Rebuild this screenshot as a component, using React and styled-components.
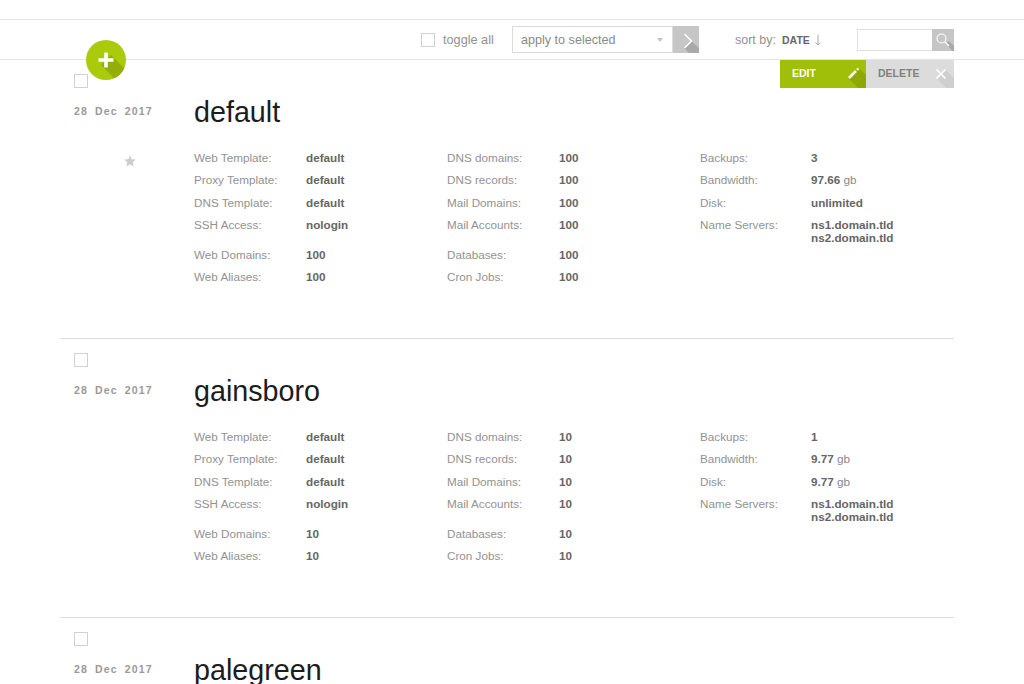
import React from "react";
import styled, { createGlobalStyle } from "styled-components";

const GlobalStyle = createGlobalStyle`
  html, body {
    margin: 0;
    padding: 0;
    height: 684px;
    overflow: hidden;
    background: #fff;
    font-family: "Liberation Sans", Arial, sans-serif;
  }
`;

const Page = styled.div`
  position: relative;
  width: 1024px;
  padding-top: 19px;
`;

const Toolbar = styled.div`
  height: 39px;
  border-top: 1px solid #e4e4e4;
  border-bottom: 1px solid #e4e4e4;
  display: flex;
  align-items: center;
  padding-left: 421px;
`;

const AddButton = styled.a`
  position: absolute;
  left: 86px;
  top: 40px;
  width: 40px;
  height: 40px;
  border-radius: 50%;
  background: #a9cb0c;
  overflow: hidden;
`;

const Check = styled.span`
  display: block;
  flex: none;
  box-sizing: border-box;
  width: 14px;
  height: 14px;
  border: 1px solid #d2d2d2;
  background: #fff;
`;

const ToggleLabel = styled.span`
  margin-left: 8px;
  width: 69px;
  font-size: 12.7px;
  color: #929292;
`;

const Select = styled.div`
  box-sizing: border-box;
  width: 161px;
  height: 27px;
  border: 1px solid #dcdcdc;
  display: flex;
  align-items: center;
  justify-content: space-between;
  padding: 0 9px 0 8px;
  font-size: 12.6px;
  color: #8a8a8a;
`;

const Caret = styled.span`
  width: 0;
  height: 0;
  border-left: 3.5px solid transparent;
  border-right: 3.5px solid transparent;
  border-top: 4px solid #c4c4c4;
`;

const IconButton = styled.span`
  display: block;
  flex: none;
  width: ${(p) => p.$w}px;
  height: ${(p) => p.$h}px;
  background: #c6c6c6;
`;

const SortLabel = styled.span`
  margin-left: 36px;
  font-size: 12.5px;
  color: #929292;
`;

const SortValue = styled.span`
  margin-left: 6px;
  font-size: 10.5px;
  font-weight: bold;
  color: #666;
`;

const SortArrow = styled.svg`
  margin-left: 4px;
  flex: none;
`;

const SearchInput = styled.span`
  display: block;
  margin-left: 35px;
  box-sizing: border-box;
  width: 75px;
  height: 22px;
  border: 1px solid #e0e0e0;
  border-right: 0;
`;

const List = styled.div`
  width: 894px;
  margin-left: 60px;
`;

const Row = styled.section`
  position: relative;
  box-sizing: border-box;
  height: 279px;
  border-bottom: 1px solid #dedede;
  display: grid;
  grid-template-columns: 134px 1fr;
  padding-top: 14px;
`;

const Actions = styled.div`
  position: absolute;
  right: 0;
  top: 0;
  display: flex;
  height: 28px;
`;

const Action = styled.a`
  box-sizing: border-box;
  width: ${(p) => p.$w}px;
  height: 28px;
  padding: 0 0 2px 12px;
  display: flex;
  align-items: center;
  justify-content: space-between;
  font-size: 10.5px;
  font-weight: bold;
  color: ${(p) => (p.$primary ? "#fff" : "#808080")};
  background: ${(p) => (p.$primary ? "#a0bf08" : "#dcdcdc")};
`;

const ActionIcon = styled.svg`
  align-self: flex-start;
`;

const Side = styled.div`
  display: flex;
  flex-direction: column;
  padding-left: 14px;
`;

const DateText = styled.div`
  margin-top: 16px;
  font-size: 10.5px;
  line-height: 14px;
  font-weight: bold;
  letter-spacing: 1.15px;
  word-spacing: 3px;
  color: #999;
  white-space: nowrap;
`;

const Star = styled.svg`
  margin-top: 37px;
  margin-left: 50px;
`;

const Main = styled.div`
  padding-top: 22px;
`;

const Title = styled.h2`
  margin: 0;
  font-size: 28.7px;
  line-height: 32px;
  font-weight: normal;
  color: #1c1c1c;
`;

const Columns = styled.div`
  margin-top: 23px;
  display: grid;
  grid-template-columns: repeat(3, 253px);
`;

const Stats = styled.dl`
  margin: 0 0 7px;
  display: grid;
  grid-template-columns: ${(p) => p.$labelWidth || 112}px 1fr;
  grid-auto-rows: 22.4px;
  align-items: start;
  font-size: 11.7px;
  line-height: 13px;
  &:last-child { margin-bottom: 0; }
`;

const Label = styled.dt`
  color: #929292;
`;

const Value = styled.dd`
  margin: 0;
  font-weight: bold;
  color: #666;
  white-space: pre-line;
`;

const Unit = styled.span`
  font-weight: normal;
  color: #888;
`;

const Gb = ({ v }) => (
  <>
    {v} <Unit>gb</Unit>
  </>
);

function StatGroup({ items, labelWidth }) {
  return (
    <Stats $labelWidth={labelWidth}>
      {items.map(([k, v]) => (
        <React.Fragment key={k}>
          <Label>{k}:</Label>
          <Value>{v}</Value>
        </React.Fragment>
      ))}
    </Stats>
  );
}

const packages = [
  { name: "default", n: "100", backups: "3", bw: <Gb v="97.66" />, disk: "unlimited", star: true, actions: true },
  { name: "gainsboro", n: "10", backups: "1", bw: <Gb v="9.77" />, disk: <Gb v="9.77" /> },
  { name: "palegreen", n: "10", backups: "1", bw: <Gb v="9.77" />, disk: <Gb v="9.77" /> },
];

function Package({ p }) {
  return (
    <Row>
      {p.actions && (
        <Actions>
          <Action $w={86} $primary>
            EDIT
            <ActionIcon width="30" height="28" viewBox="0 0 30 28">
              <polygon points="13,19 23,8 30,15 30,28 22,28" fill="#8ea806" />
              <path d="M13 18 L20 11" stroke="#fff" strokeWidth="2.600" />
              <path d="M21 10 L22.500 8.500" stroke="#fff" strokeWidth="2.400" />
            </ActionIcon>
          </Action>
          <Action $w={88}>
            DELETE
            <ActionIcon width="30" height="28" viewBox="0 0 30 28">
              <polygon points="13,19 22,10 30,18 30,28 22,28" fill="#cfcfcf" />
              <path d="M12.500 9.500 L21.500 18.500 M21.500 9.500 L12.500 18.500" stroke="#fff" strokeWidth="1.700" />
            </ActionIcon>
          </Action>
        </Actions>
      )}
      <Side>
        <Check />
        <DateText>28 Dec 2017</DateText>
        {p.star && (
          <Star width="12" height="12" viewBox="0 0 24 24">
            <path d="M12 .5l3.400 7.800 8.300.8-6.300 5.500 1.900 8.200L12 18.500l-7.300 4.300 1.900-8.200L.3 9.100l8.300-.8z" fill="#cccccc" />
          </Star>
        )}
      </Side>
      <Main>
        <Title>{p.name}</Title>
        <Columns>
          <div>
            <StatGroup
              items={[
                ["Web Template", "default"],
                ["Proxy Template", "default"],
                ["DNS Template", "default"],
                ["SSH Access", "nologin"],
              ]}
            />
            <StatGroup items={[["Web Domains", p.n], ["Web Aliases", p.n]]} />
          </div>
          <div>
            <StatGroup
              items={[
                ["DNS domains", p.n],
                ["DNS records", p.n],
                ["Mail Domains", p.n],
                ["Mail Accounts", p.n],
              ]}
            />
            <StatGroup items={[["Databases", p.n], ["Cron Jobs", p.n]]} />
          </div>
          <div>
            <StatGroup
              labelWidth={111}
              items={[
                ["Backups", p.backups],
                ["Bandwidth", p.bw],
                ["Disk", p.disk],
                ["Name Servers", "ns1.domain.tld\nns2.domain.tld"],
              ]}
            />
          </div>
        </Columns>
      </Main>
    </Row>
  );
}

export default function App() {
  return (
    <Page>
      <GlobalStyle />
      <Toolbar>
        <Check />
        <ToggleLabel>toggle all</ToggleLabel>
        <Select>
          apply to selected
          <Caret />
        </Select>
        <IconButton as="svg" $w={26} $h={27} viewBox="0 0 26 27">
          <polygon points="11,22 18.500,15 26,22 26,27 16,27" fill="#a9a9a9" />
          <path d="M11.500 8 L18.500 15 L11.500 22" fill="none" stroke="#fff" strokeWidth="1.500" />
        </IconButton>
        <SortLabel>sort by:</SortLabel>
        <SortValue>DATE</SortValue>
        <SortArrow width="8" height="12" viewBox="0 0 8 12">
          <path d="M4 0.500V11M1.500 8.500L4 11 6.500 8.500" fill="none" stroke="#aaa" strokeWidth="1" />
        </SortArrow>
        <SearchInput />
        <IconButton as="svg" $w={22} $h={22} viewBox="0 0 22 22">
          <polygon points="14,14 17,12 22,17 22,22 20,22" fill="#a9a9a9" />
          <circle cx="9.500" cy="9.500" r="4.500" fill="none" stroke="#fff" strokeWidth="1.100" />
          <path d="M13 13 L17 17" stroke="#fff" strokeWidth="1.300" />
        </IconButton>
      </Toolbar>
      <AddButton>
        <svg width="40" height="40" viewBox="0 0 40 40">
          <polygon points="15,25 25,15 46,36 36,46" fill="#95ad08" />
          <path d="M20 12.500V27.500M12.500 20H27.500" stroke="#fff" strokeWidth="3.600" />
        </svg>
      </AddButton>
      <List>
        {packages.map((p) => (
          <Package key={p.name} p={p} />
        ))}
      </List>
    </Page>
  );
}
